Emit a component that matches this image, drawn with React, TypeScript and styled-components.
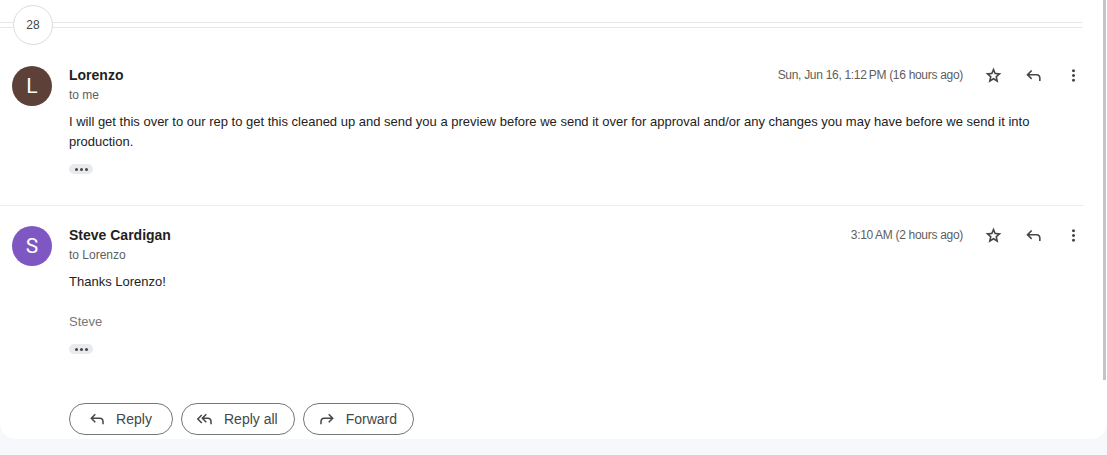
import React from "react";
import styled, { createGlobalStyle } from "styled-components";

const GlobalStyle = createGlobalStyle`
    html, body {
        margin: 0;
        padding: 0;
        background: #f6f8fc;
        font-family: "Liberation Sans", Arial, sans-serif;
        color: #1f1f1f;
    }
`;

type Msg = {
    initial: string;
    color: string;
    name: string;
    to: string;
    date: string;
    body: string[];
    signature?: string;
};

const messages: Msg[] = [
    {
        initial: "L",
        color: "#5d4037",
        name: "Lorenzo",
        to: "to me",
        date: "Sun, Jun 16, 1:12\u202fPM (16 hours ago)",
        body: [
            "I will get this over to our rep to get this cleaned up and send you a preview before we send it over for approval and/or any changes you may have before we send it into production.",
        ],
    },
    {
        initial: "S",
        color: "#7e57c2",
        name: "Steve Cardigan",
        to: "to Lorenzo",
        date: "3:10\u202fAM (2 hours ago)",
        body: ["Thanks Lorenzo!"],
        signature: "Steve",
    },
];

const paths = {
    reply: "M760-200v-160q0-50-35-85t-85-35H273l144 144-57 56-240-240 240-240 57 56-144 144h367q83 0 141.5 58.5T840-360v160h-80Z",
    replyAll:
        "M280-240 40-480l240-240 56 56-183 184 183 184-56 56Zm480 40v-160q0-50-35-85t-85-35H433l144 144-56 56-241-240 241-240 56 56-144 144h207q83 0 141.5 58.5T840-360v160h-80Z",
    forward: "M120-200v-160q0-83 58.5-141.5T320-560h367L543-704l57-56 240 240-240 240-57-56 144-144H320q-50 0-85 35t-35 85v160h-80Z",
    star: "m354-287 126-76 126 77-33-144 111-96-146-13-58-136-58 135-146 13 111 97-33 143ZM233-120l65-281L80-590l288-25 112-265 112 265 288 25-218 189 65 281-247-149-247 149Zm247-350Z",
    more: "M480-160q-33 0-56.5-23.5T400-240q0-33 23.5-56.5T480-320q33 0 56.5 23.5T560-240q0 33-23.5 56.5T480-160Zm0-240q-33 0-56.5-23.5T400-480q0-33 23.5-56.5T480-560q33 0 56.5 23.5T560-480q0 33-23.5 56.5T480-400Zm0-240q-33 0-56.5-23.5T400-720q0-33 23.5-56.5T480-800q33 0 56.5 23.5T560-720q0 33-23.5 56.5T480-640Z",
};

const Icon: React.FC<{ d: string; size?: number }> = ({ d, size = 18 }) => (
    <svg width={size} height={size} viewBox="0 -960 960 960" fill="currentColor">
        <path d={d} />
    </svg>
);

export default function App() {
    return (
        <>
            <GlobalStyle />
            <Panel>
                <Main>
                    <Collapsed>
                        <CountBubble>28</CountBubble>
                    </Collapsed>
                    {messages.map((m, i) => (
                        <Message key={i} $last={i === messages.length - 1}>
                            <Avatar $bg={m.color}>{m.initial}</Avatar>
                            <Content>
                                <Header>
                                    <Who>
                                        <Name>{m.name}</Name>
                                        <To>{m.to}</To>
                                    </Who>
                                    <Meta>
                                        <DateText>{m.date}</DateText>
                                        <Actions>
                                            <IconBtn title="Star">
                                                <Icon d={paths.star} size={19} />
                                            </IconBtn>
                                            <IconBtn title="Reply">
                                                <Icon d={paths.reply} size={19} />
                                            </IconBtn>
                                            <IconBtn title="More">
                                                <Icon d={paths.more} size={19} />
                                            </IconBtn>
                                        </Actions>
                                    </Meta>
                                </Header>
                                <Body>
                                    {m.body.map((p, j) => (
                                        <p key={j}>{p}</p>
                                    ))}
                                    {m.signature && <Signature>{m.signature}</Signature>}
                                </Body>
                                <Ellipsis>
                                    <Dot />
                                    <Dot />
                                    <Dot />
                                </Ellipsis>
                            </Content>
                        </Message>
                    ))}
                    <ButtonRow>
                        <PillButton>
                            <Icon d={paths.reply} />
                            Reply
                        </PillButton>
                        <PillButton>
                            <Icon d={paths.replyAll} />
                            Reply all
                        </PillButton>
                        <PillButton>
                            <Icon d={paths.forward} />
                            Forward
                        </PillButton>
                    </ButtonRow>
                </Main>
                <ScrollTrack>
                    <Thumb />
                </ScrollTrack>
            </Panel>
        </>
    );
}

const Panel = styled.div`
    display: flex;
    height: 439px;
    background: #fff;
    border-radius: 0 0 16px 16px;
    overflow: hidden;
`;

const Main = styled.div`
    flex: 1;
    display: flex;
    flex-direction: column;
    min-width: 0;
`;

const ScrollTrack = styled.div`
    width: 22px;
    display: flex;
    justify-content: flex-end;
    padding-right: 1px;
`;

const Thumb = styled.div`
    width: 3px;
    height: 380px;
    background: #c4c4c4;
`;

const Collapsed = styled.div`
    position: relative;
    height: 45px;
    display: flex;
    align-items: flex-start;
    padding-left: 13px;

    &::before {
        content: "";
        position: absolute;
        left: 0;
        right: 2px;
        top: 22px;
        height: 4px;
        border-top: 1px solid #e6e6e6;
        border-bottom: 1px solid #e6e6e6;
    }
`;

const CountBubble = styled.div`
    position: relative;
    margin-top: 5px;
    width: 38px;
    height: 38px;
    border-radius: 50%;
    border: 1px solid #dadce0;
    background: #fff;
    display: flex;
    align-items: center;
    justify-content: center;
    font-size: 12px;
    color: #444746;
`;

const Message = styled.div<{ $last: boolean }>`
    display: flex;
    gap: 17px;
    padding: ${p => (p.$last ? "19px 0 0 12px" : "20px 0 31px 12px")};
    border-bottom: ${p => (p.$last ? "none" : "1px solid #eceff1")};
`;

const Avatar = styled.div<{ $bg: string }>`
    flex: none;
    width: 40px;
    height: 40px;
    margin-top: 1px;
    border-radius: 50%;
    background: ${p => p.$bg};
    color: #fff;
    font-family: Roboto, "Liberation Sans", sans-serif;
    font-size: 21px;
    display: flex;
    align-items: center;
    justify-content: center;
`;

const Content = styled.div`
    flex: 1;
    min-width: 0;
    display: flex;
    flex-direction: column;
`;

const Header = styled.div`
    display: flex;
    justify-content: space-between;
    align-items: flex-start;
`;

const Who = styled.div`
    display: flex;
    flex-direction: column;
`;

const Name = styled.span`
    font-size: 14px;
    font-weight: bold;
    line-height: 20px;
    color: #1f1f1f;
`;

const To = styled.span`
    font-size: 12px;
    line-height: 20px;
    color: #5e5e5e;
`;

const Meta = styled.div`
    display: flex;
    align-items: center;
    height: 20px;
`;

const DateText = styled.span`
    font-size: 12px;
    letter-spacing: -0.3px;
    color: #5e5e5e;
    margin-right: 14px;
    white-space: nowrap;
`;

const Actions = styled.div`
    display: flex;
    gap: 8px;
    margin-right: -5px;
`;

const IconBtn = styled.button`
    width: 32px;
    height: 20px;
    padding: 0;
    border: none;
    background: none;
    color: #444746;
    display: flex;
    align-items: center;
    justify-content: center;
    cursor: pointer;
`;

const Body = styled.div`
    margin-top: 7px;
    font-size: 13px;
    line-height: 20px;
    color: #222;

    p {
        margin: 0;
    }
`;

const Signature = styled.p`
    && {
        margin-top: 20px;
    }
    color: #777;
`;

const Ellipsis = styled.div`
    margin-top: 12px;
    width: 24px;
    height: 10px;
    border-radius: 5px;
    background: #e8eaed;
    display: flex;
    align-items: center;
    justify-content: center;
    gap: 2px;
`;

const Dot = styled.span`
    width: 3px;
    height: 3px;
    border-radius: 50%;
    background: #444746;
`;

const ButtonRow = styled.div`
    display: flex;
    gap: 8px;
    margin-top: 49px;
    padding-left: 69px;
`;

const PillButton = styled.button`
    min-width: 104px;
    height: 32px;
    padding: 0 16px 0 14px;
    border: 1px solid #747775;
    border-radius: 16px;
    background: #fff;
    color: #444746;
    font-family: "Liberation Sans", Arial, sans-serif;
    font-size: 14px;
    display: flex;
    align-items: center;
    justify-content: center;
    gap: 10px;
    cursor: pointer;
`;
